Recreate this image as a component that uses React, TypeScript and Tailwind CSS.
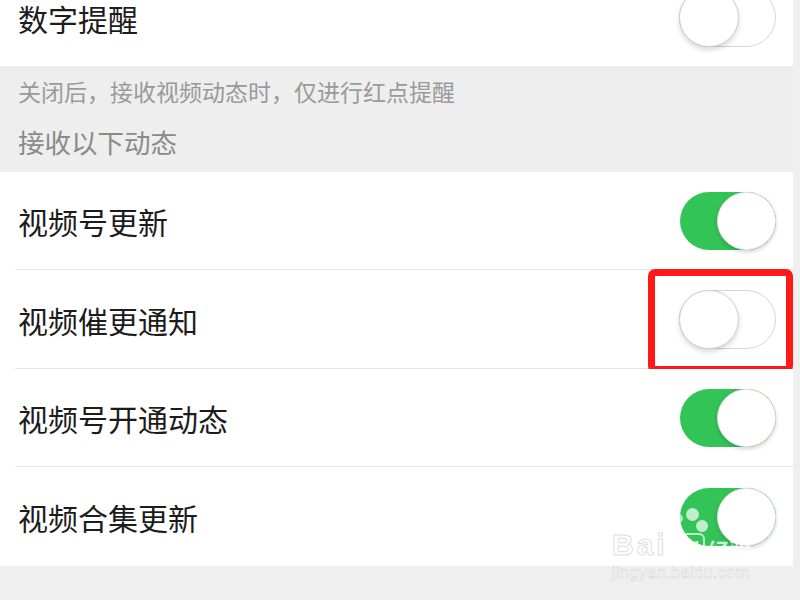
import React from "react";

const font = { fontFamily: '"Noto Sans CJK SC", "Noto Sans", sans-serif' };

function Toggle({ on }: { on: boolean }) {
  if (on) {
    return (
      <div className="relative w-[96px] h-[58px] rounded-full bg-[#33c457] shrink-0">
        <div className="absolute right-0 top-0 w-[59px] h-[58px] rounded-full bg-white border border-[#e2e2e2] shadow-[0_2px_4px_rgba(0,0,0,0.18)]" />
      </div>
    );
  }
  return (
    <div className="relative w-[97px] h-[59px] rounded-full bg-white border border-[#d6d6d6] shrink-0">
      <div className="absolute -left-px -top-px w-[60px] h-[59px] rounded-full bg-white border border-[#cfcfcf] shadow-[0_3px_5px_rgba(0,0,0,0.15)]" />
    </div>
  );
}

function Row({
  label,
  on,
  border,
  h,
  children,
}: {
  label: string;
  on: boolean;
  border?: boolean;
  h: string;
  children?: React.ReactNode;
}) {
  return (
    <div className={`relative bg-white ${h}`}>
      <div className="flex items-center justify-between h-full pl-[18px] pr-[17px]">
        <span className="text-[30px] leading-none text-[#1c1c1c]">{label}</span>
        <Toggle on={on} />
      </div>
      {border && <div className="absolute left-[15px] right-0 bottom-0 h-px bg-[#e6e6e6]" />}
      {children}
    </div>
  );
}

export default function App() {
  return (
    <div className="w-[800px] h-[600px] overflow-hidden bg-[#efefef] relative" style={font}>
      <div className="mr-[7px]">
        <div className="bg-white h-[66px] flex items-start justify-between pl-[18px] pr-[17px]">
          <span className="mt-[3px] text-[30px] leading-[30px] text-[#1c1c1c]">数字提醒</span>
          <div className="-mt-[12px]">
            <Toggle on={false} />
          </div>
        </div>
        <div className="bg-[#eeeeee] h-[106px] flex flex-col pl-[18px]">
          <div className="h-[50px] flex items-center pt-[1px] text-[23px] leading-none text-[#9a9a9a]">
            关闭后，接收视频动态时，仅进行红点提醒
          </div>
          <div className="h-[56px] flex items-center pb-[4px] text-[26.5px] leading-none text-[#8a8a8a]">
            接收以下动态
          </div>
        </div>
        <Row label="视频号更新" on={true} border h="h-[98px]" />
        <Row label="视频催更通知" on={false} border h="h-[99px]">
          <div className="absolute left-[648px] top-[-1px] w-[145px] h-[104px] border-[7px] border-[#ff1a1a] rounded-[7px]" />
        </Row>
        <Row label="视频号开通动态" on={true} border h="h-[98px]" />
        <Row label="视频合集更新" on={true} h="h-[99px]" />
      </div>

      {/* watermark */}
      <div className="absolute left-[612px] top-[530px] pointer-events-none">
        <div className="relative flex items-end">
          <span
            className="text-[30px] font-bold leading-none text-white/80 tracking-[3px]"
            style={{ fontFamily: '"Liberation Sans", Arial, sans-serif', WebkitTextStroke: "1px rgba(200,200,200,0.6)" }}
          >
            Bai
          </span>
          <span
            className="text-[22px] font-bold leading-none text-white/80 rounded-b-[12px] rounded-t-[6px] border-2 border-white/70 px-[3px] pb-[1px]"
            style={{ fontFamily: '"Liberation Sans", Arial, sans-serif' }}
          >
            du
          </span>
          <span className="text-[22px] font-bold leading-none text-white/75 ml-[3px]">经验</span>
          <div className="absolute left-[62px] top-[-16px] w-[9px] h-[9px] rounded-full bg-white/60" />
          <div className="absolute left-[74px] top-[-22px] w-[13px] h-[13px] rounded-full bg-white/70" />
          <div className="absolute left-[84px] top-[-10px] w-[12px] h-[12px] rounded-full bg-white/70" />
        </div>
        <div
          className="mt-[5px] text-[16px] leading-none text-white/90 tracking-[0.5px]"
          style={{ fontFamily: '"Liberation Sans", Arial, sans-serif', WebkitTextStroke: "0.5px rgba(190,190,190,0.7)" }}
        >
          jingyan.baidu.com
        </div>
      </div>
    </div>
  );
}
